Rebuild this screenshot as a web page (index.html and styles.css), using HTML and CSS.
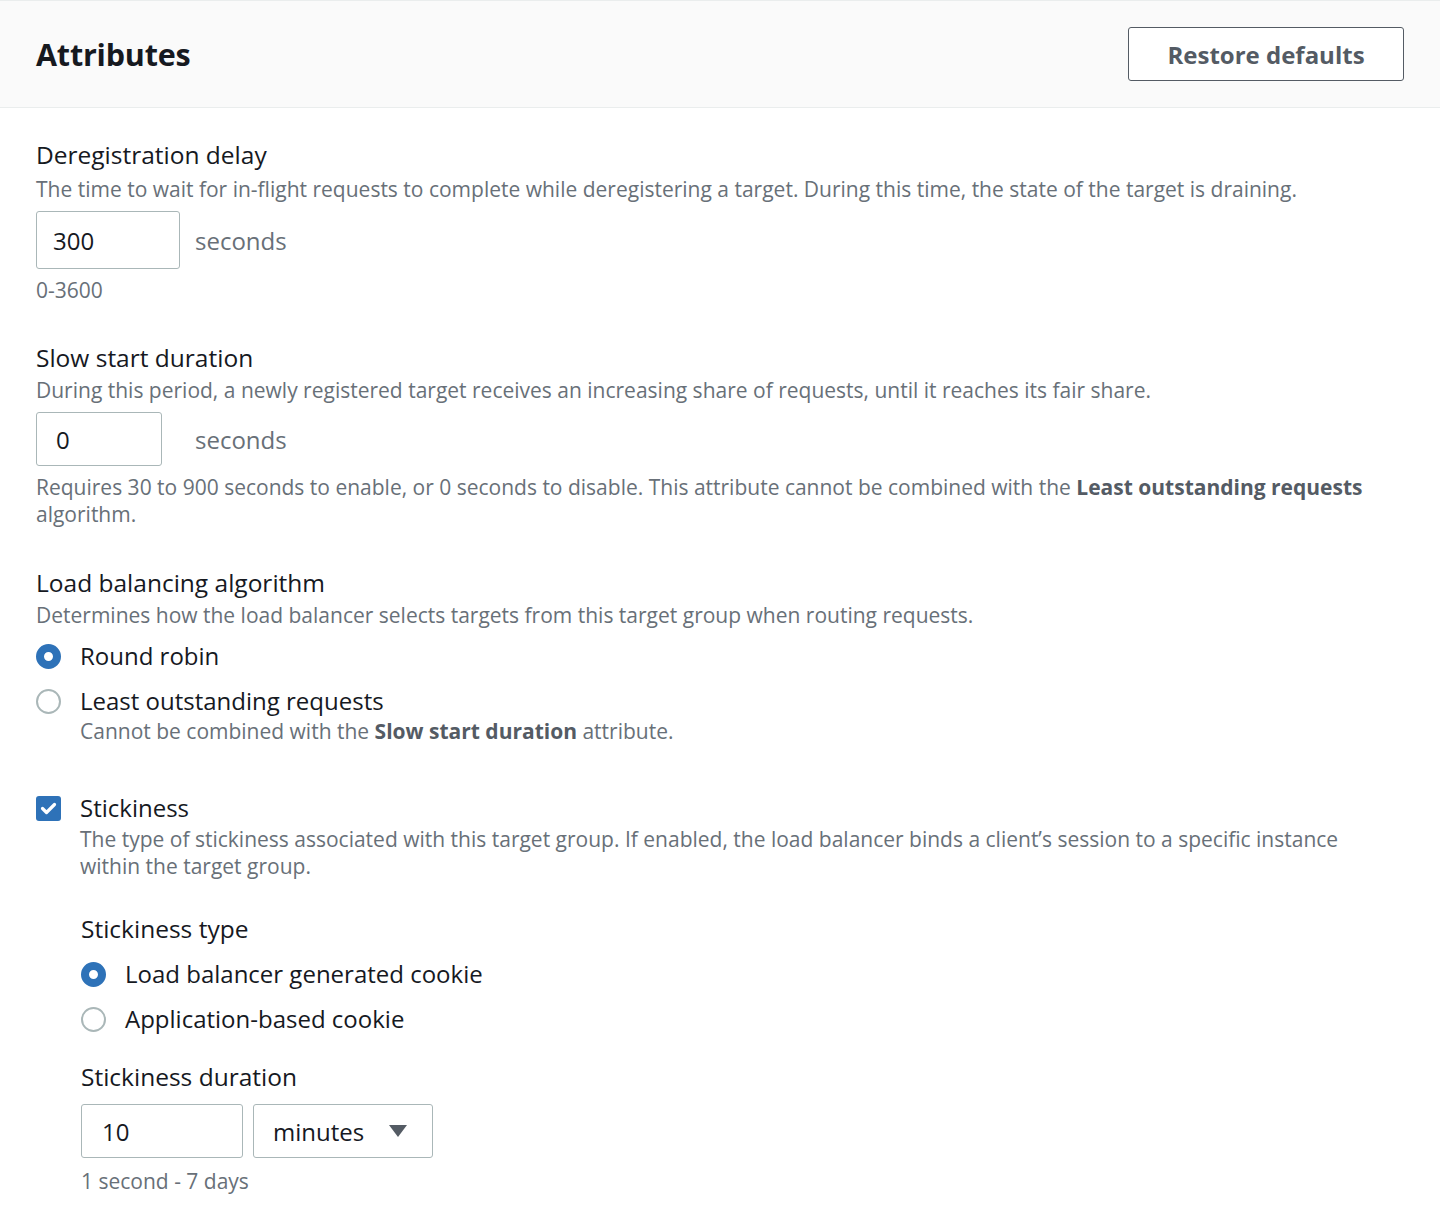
FILE: index.html
```html
<!DOCTYPE html>
<html lang="en">
  <head>
    <meta charset="utf-8" />
    <link rel="stylesheet" href="styles.css">
  </head>
  <body>

<div class="panel">
  <div class="panel-header">
    <h2>Attributes</h2>
    <button class="btn">Restore defaults</button>
  </div>

  <div class="panel-body">

    <div class="field first">
      <div class="label">Deregistration delay</div>
      <div class="desc">The time to wait for in-flight requests to complete while deregistering a target. During this time, the state of the target is draining.</div>
      <div class="control-row">
        <div class="input" id="delay">300</div>
        <span class="unit">seconds</span>
      </div>
      <div class="hint">0-3600</div>
    </div>

    <div class="field">
      <div class="label">Slow start duration</div>
      <div class="desc">During this period, a newly registered target receives an increasing share of requests, until it reaches its fair share.</div>
      <div class="control-row">
        <div class="input" id="slow">0</div>
        <span class="unit">seconds</span>
      </div>
      <div class="hint">Requires 30 to 900 seconds to enable, or 0 seconds to disable. This attribute cannot be combined with the <b>Least outstanding requests</b> algorithm.</div>
    </div>

    <div class="field algo">
      <div class="label">Load balancing algorithm</div>
      <div class="desc">Determines how the load balancer selects targets from this target group when routing requests.</div>
      <div class="options">
        <div class="option">
          <span class="radio checked"></span>
          <div>
            <div class="option-label">Round robin</div>
          </div>
        </div>
        <div class="option">
          <span class="radio"></span>
          <div>
            <div class="option-label">Least outstanding requests</div>
            <div class="option-desc">Cannot be combined with the <b>Slow start duration</b> attribute.</div>
          </div>
        </div>
      </div>
    </div>

    <div class="field stickiness">
      <div class="option">
        <span class="checkbox">
          <svg width="25" height="25" viewBox="0 0 25 25"><path d="M6.5 12.5 L10.5 16.5 L18.5 8.5" fill="none" stroke="#fff" stroke-width="3.2" stroke-linecap="round" stroke-linejoin="round"/></svg>
        </span>
        <div>
          <div class="option-label">Stickiness</div>
          <div class="option-desc">The type of stickiness associated with this target group. If enabled, the load balancer binds a client’s session to a specific instance within the target group.</div>
        </div>
      </div>

      <div class="nested">
        <div class="label">Stickiness type</div>
        <div class="options">
          <div class="option">
            <span class="radio checked"></span>
            <div class="option-label">Load balancer generated cookie</div>
          </div>
          <div class="option">
            <span class="radio"></span>
            <div class="option-label">Application-based cookie</div>
          </div>
        </div>

        <div class="label duration-label">Stickiness duration</div>
        <div class="control-row duration-row">
          <div class="input" id="duration">10</div>
          <div class="select">
            <span>minutes</span>
            <svg width="20" height="14" viewBox="0 0 20 14"><path d="M1 1 H19 L10 13 Z" fill="#545b64"/></svg>
          </div>
        </div>
        <div class="hint duration-hint">1 second - 7 days</div>
      </div>
    </div>

  </div>
</div>

  </body>
</html>
```

FILE: styles.css
```css
html{
	background-color: white;
}

body{
	margin: 0;
	font-family: "Open Sans", "Noto Sans", sans-serif;
	color: #16191f;
}

.panel-header{
	display: flex;
	justify-content: space-between;
	align-items: center;
	height: 106px;
	padding: 0 36px;
	background-color: #fafafa;
	border-top: 1px solid #eaeded;
	border-bottom: 1px solid #eaeded;
}

.panel-header h2{
	margin: 0;
	font-size: 30.5px;
	font-weight: 700;
	letter-spacing: -0.2px;
}

.btn{
	height: 54px;
	width: 276px;
	background-color: white;
	border: 1px solid #545b64;
	border-radius: 3px;
	font-family: inherit;
	font-size: 24px;
	font-weight: 700;
	color: #545b64;
}

.panel-body{
	padding: 32px 36px 20px;
}

.field{
	margin-bottom: 40px;
}

.label{
	font-size: 24.5px;
	line-height: 30px;
}

.desc{
	font-size: 21px;
	line-height: 26px;
	color: #687078;
	margin-top: 4px;
}

.first{
	margin-bottom: 39px;
}

.first .desc{
	margin-top: 6px;
}

.control-row{
	display: flex;
	align-items: center;
	margin-top: 9px;
}

.input{
	box-sizing: border-box;
	border: 1px solid #aab7b8;
	border-radius: 3px;
	font-size: 24px;
	display: flex;
	align-items: center;
	background: white;
}

#delay{
	width: 144px;
	height: 58px;
	padding-left: 16px;
}

#slow{
	width: 126px;
	height: 54px;
	padding-left: 19px;
}

.unit{
	margin-left: 15px;
	font-size: 24px;
	color: #687078;
}

#slow + .unit{
	margin-left: 33px;
}

.hint{
	font-size: 21px;
	line-height: 27px;
	color: #687078;
	margin-top: 8px;
}

.hint b, .option-desc b{
	font-weight: 700;
	color: #545b64;
}

.options{
	margin-top: 13px;
}

.option{
	display: flex;
	align-items: flex-start;
	margin-bottom: 15px;
}

.option:last-child{
	margin-bottom: 0;
}

.option-label{
	font-size: 24px;
	line-height: 30px;
}

.option-desc{
	font-size: 21px;
	line-height: 27px;
	color: #687078;
	margin-top: 2px;
}

.radio{
	box-sizing: border-box;
	flex: none;
	width: 25px;
	height: 25px;
	margin: 3px 19px 0 0;
	border-radius: 50%;
	border: 2px solid #aab7b8;
	background: white;
}

.radio.checked{
	border: 8px solid #2e72b8;
}

.checkbox{
	flex: none;
	width: 25px;
	height: 25px;
	margin: 3px 19px 0 0;
	border-radius: 3px;
	background-color: #2e72b8;
}

.checkbox svg{
	display: block;
}

.algo{
	margin-bottom: 48px;
}

.stickiness .option-desc{
	max-width: 1290px;
	margin-top: 3px;
}

.nested{
	padding-left: 45px;
	margin-top: 34px;
}

.nested .options{
	margin-top: 15px;
}

.duration-label{
	margin-top: 28px;
}

.duration-row{
	margin-top: 12px;
	gap: 10px;
}

#duration{
	width: 162px;
	height: 54px;
	padding-left: 20px;
}

.select{
	box-sizing: border-box;
	width: 180px;
	height: 54px;
	border: 1px solid #aab7b8;
	border-radius: 3px;
	display: flex;
	align-items: center;
	justify-content: space-between;
	padding: 0 24px 0 19px;
	font-size: 24px;
}

.select svg{
	display: block;
}

.duration-hint{
	margin-top: 10px;
}
```
